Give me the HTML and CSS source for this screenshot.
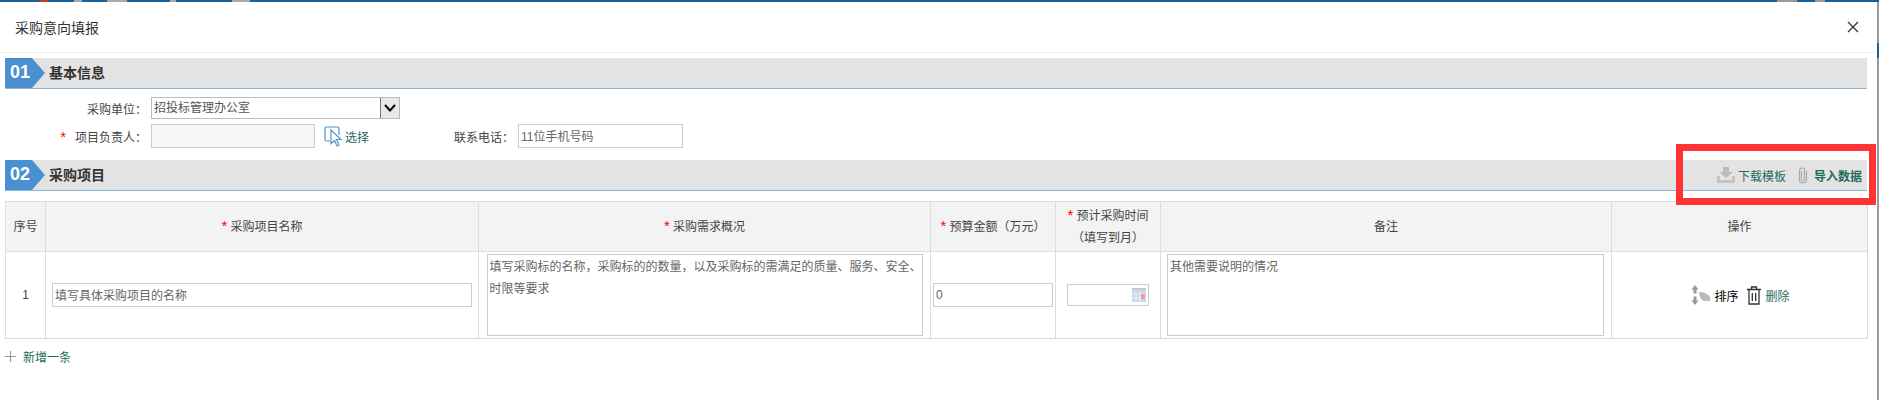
FILE: index.html
```html
<!DOCTYPE html>
<html lang="zh-CN">
<head>
  <meta charset="UTF-8" />
  <title>采购意向填报</title>
  <link rel="stylesheet" href="styles.css">
</head>
<body>
  <div class="top-strip"></div>

  <div class="modal">
    <div class="modal-head">
      <span class="modal-title">采购意向填报</span>
      <svg class="close-icon" width="12" height="12" viewBox="0 0 12 12"><path d="M1 1L11 11M11 1L1 11" stroke="#333" stroke-width="1.3" fill="none"/></svg>
    </div>

    <div class="modal-body">
      <div class="section-bar">
        <span class="badge">01</span>
        <span class="section-title">基本信息</span>
      </div>

      <div class="form-row form-row-first">
        <label class="form-label">采购单位&#xFF1A;</label>
        <div class="select-box">
          <span class="select-text">招投标管理办公室</span>
          <span class="select-arrow">
            <svg width="12" height="8" viewBox="0 0 12 8"><path d="M1 1L6 6.5L11 1" stroke="#000" stroke-width="2" fill="none"/></svg>
          </span>
        </div>
      </div>

      <div class="form-row">
        <label class="form-label"><span class="star star-form">*</span>项目负责人&#xFF1A;</label>
        <input class="text-input input-person input-gray" type="text" />
        <a class="pick-link">
          <svg width="19" height="21" viewBox="0 0 19 21">
            <path d="M6 15H2.5Q1 15 1 13.5V2.5Q1 1 2.5 1H13.5Q15 1 15 2.5V9" stroke="#4a90d0" stroke-width="1.2" fill="none"/>
            <path d="M7 4L17 13.5H12.5L15 19L13 20L10.5 14.5L7 17.5Z" stroke="#4a90d0" stroke-width="1.1" fill="#fff"/>
          </svg>
          <span>选择</span>
        </a>
        <label class="form-label form-label-phone">联系电话&#xFF1A;</label>
        <input class="text-input input-phone" type="text" value="11位手机号码" />
      </div>

      <div class="section-bar section-bar-second">
        <span class="badge">02</span>
        <span class="section-title">采购项目</span>
        <div class="bar-tools">
          <a class="tool-link">
            <svg width="18" height="16" viewBox="0 0 18 16">
              <path d="M6 0H12V5H16L9 11L2 5H6Z" fill="#bbb"/>
              <path d="M0 9H3V13H15V9H18V16H0Z" fill="#c4c4c4"/>
            </svg>
            <span>下载模板</span>
          </a>
          <a class="tool-link tool-link-strong">
            <svg width="10" height="17" viewBox="0 0 10 17">
              <path d="M3.5 4V12.5Q3.5 14 5 14Q6.5 14 6.5 12.5V3Q6.5 1 4.5 1Q1.5 1 1.5 3.5V13Q1.5 16 5 16Q8.5 16 8.5 13V4" stroke="#aaa" stroke-width="1.2" fill="none"/>
            </svg>
            <span>导入数据</span>
          </a>
        </div>
      </div>

      <table class="item-table">
        <colgroup>
          <col class="col-no" /><col class="col-name" /><col class="col-need" />
          <col class="col-money" /><col class="col-date" /><col class="col-note" /><col class="col-op" />
        </colgroup>
        <thead>
          <tr>
            <th>序号</th>
            <th><span class="star">*</span> 采购项目名称</th>
            <th><span class="star">*</span> 采购需求概况</th>
            <th><span class="star">*</span> 预算金额&#xFF08;万元&#xFF09;</th>
            <th><span class="star">*</span> 预计采购时间<br />&#xFF08;填写到月&#xFF09;</th>
            <th>备注</th>
            <th>操作</th>
          </tr>
        </thead>
        <tbody>
          <tr>
            <td>1</td>
            <td><input class="text-input input-cell" type="text" value="填写具体采购项目的名称" /></td>
            <td><textarea class="area-input">填写采购标的名称&#xFF0C;采购标的的数量&#xFF0C;以及采购标的需满足的质量、服务、安全、时限等要求</textarea></td>
            <td><input class="text-input input-money" type="text" value="0" /></td>
            <td>
              <div class="date-box">
                <svg width="14" height="14" viewBox="0 0 14 14">
                  <rect x="0" y="0" width="14" height="3" fill="#c9c9c9"/>
                  <rect x="0" y="2" width="14" height="12" fill="#c5d6ee"/>
                  <path d="M0 6H14M0 10H14M4 3V14M8 3V14" stroke="#eef3fa" stroke-width="1"/>
                  <rect x="9" y="6" width="4" height="5" fill="#f0a080"/>
                </svg>
              </div>
            </td>
            <td><textarea class="area-input area-note">其他需要说明的情况</textarea></td>
            <td>
              <div class="op-cell">
                <svg width="20" height="20" viewBox="0 0 20 20">
                  <path d="M4 0L7.5 4.5H5.5V8.5H2.5V4.5H0.5ZM2.5 11.5H5.5V15.5H7.5L4 20L0.5 15.5H2.5Z" fill="#999"/>
                  <path d="M8 7L13 7.5L18 10.5Q20 13 19 16L12 16Q8 12 8 7Z" fill="#bbb"/>
                </svg>
                <span class="op-sort">排序</span>
                <svg class="op-trash" width="14" height="19" viewBox="0 0 14 19">
                  <path d="M0 3.5H14M4.5 3V1H9.5V3M2 4V18H12V4M5.3 7V15M8.7 7V15" stroke="#333" stroke-width="1.3" fill="none"/>
                </svg>
                <a class="op-link">删除</a>
              </div>
            </td>
          </tr>
        </tbody>
      </table>

      <a class="add-row">
        <svg width="11" height="11" viewBox="0 0 11 11"><path d="M5.5 0V11M0 5.5H11" stroke="#999" stroke-width="1.2"/></svg>
        <span>新增一条</span>
      </a>
    </div>
  </div>

  <div class="mark-box"></div>
</body>
</html>
```

FILE: styles.css
```css
:root {
  --line: #dddddd;
  --field: #cccccc;
  --link: #1e6b5c;
  --band: #e3e3e3;
  --blue: #4a90d0;
}
html, body {
  margin: 0;
  height: 400px;
  overflow: hidden;
}
body {
  font-family: 'Liberation Sans', 'Noto Sans CJK SC', sans-serif;
  font-size: 12px;
  color: #333;
  background: linear-gradient(#999 43px, #1a5f96 43px, #1a5f96 58px, #999 58px);
}
.top-strip {
  height: 2px;
  background: linear-gradient(90deg,
    #1a5f96 39px, #a8471c 39px, #a8471c 48px, #1a5f96 48px,
    #1a5f96 74px, #aaa 74px, #aaa 82px, #1a5f96 82px,
    #1a5f96 107px, #aaa 107px, #aaa 127px, #1a5f96 127px,
    #1a5f96 170px, #aaa 170px, #aaa 176px, #1a5f96 176px,
    #1a5f96 232px, #aaa 232px, #aaa 250px, #1a5f96 250px,
    #1a5f96 1777px, #999 1777px, #999 1797px, #1a5f96 1797px,
    #1a5f96 1815px, #999 1815px, #999 1825px, #1a5f96 1825px);
}
.modal {
  width: 1877px;
  height: 398px;
  background: #fff;
}
.modal-head {
  height: 50px;
  display: flex;
  align-items: center;
  justify-content: space-between;
  padding: 0 18px 0 15px;
  border-bottom: 1px solid #eee;
}
.modal-title {
  font-size: 14px;
}
.modal-body {
  padding: 5px 10px 0 5px;
}

/* section bars */
.section-bar {
  display: flex;
  align-items: center;
  height: 30px;
  background: var(--band);
  border-bottom: 1px solid #8fb4d4;
}
.section-bar-second {
  margin-top: 12px;
}
.badge {
  width: 40px;
  height: 30px;
  line-height: 28px;
  padding-left: 5px;
  box-sizing: border-box;
  background: var(--blue);
  clip-path: polygon(0 0, 27px 0, 100% 50%, 27px 100%, 0 100%);
  color: #fff;
  font-size: 18px;
  font-weight: bold;
}
.section-title {
  margin-left: 4px;
  padding-bottom: 2px;
  font-size: 14px;
  font-weight: bold;
}
.bar-tools {
  margin-left: auto;
  display: flex;
  align-items: center;
  gap: 12px;
  padding-right: 5px;
}
.tool-link {
  display: flex;
  align-items: center;
  gap: 3px;
  color: var(--link);
}
.tool-link-strong {
  gap: 6px;
  font-weight: bold;
}

/* form */
.form-row {
  display: flex;
  align-items: center;
  margin-top: 5px;
}
.form-row-first {
  margin-top: 8px;
}
.form-label {
  width: 142px;
  margin-right: 4px;
  color: #444;
  text-align: right;
}
.form-label-phone {
  width: auto;
  margin-left: 85px;
}
.star {
  color: #f00;
  font-size: 15px;
  line-height: 12px;
}
.star-form {
  margin-right: 9px;
}
.text-input {
  box-sizing: border-box;
  height: 24px;
  padding: 0 2px 1px;
  border: 1px solid var(--field);
  background: #fff;
  font: inherit;
  color: #666;
  outline: none;
}
.input-gray {
  background: #f7f7f7;
}
.input-person {
  width: 164px;
}
.input-phone {
  width: 165px;
}
.select-box {
  display: flex;
  width: 249px;
  height: 22px;
  box-sizing: border-box;
  border: 1px solid #bbb;
  color: #555;
}
.select-text {
  flex: 1;
  line-height: 20px;
  padding-left: 2px;
}
.select-arrow {
  width: 18px;
  display: flex;
  align-items: center;
  justify-content: center;
  background: #e8e8e8;
  border-left: 1px solid #767676;
}
.pick-link {
  display: flex;
  align-items: center;
  gap: 2px;
  margin-left: 9px;
  color: var(--link);
}

/* table */
.item-table {
  width: 1862px;
  margin-top: 10px;
  border-collapse: collapse;
  table-layout: fixed;
}
.col-no { width: 40px; }
.col-name { width: 433px; }
.col-need { width: 452px; }
.col-money { width: 125px; }
.col-date { width: 105px; }
.col-note { width: 451px; }
.col-op { width: 256px; }
.item-table th,
.item-table td {
  border: 1px solid var(--line);
  padding: 0;
  text-align: center;
  vertical-align: middle;
}
.item-table th {
  height: 49px;
  line-height: 22px;
  background: #f3f3f3;
  color: #444;
  font-weight: normal;
}
.item-table td {
  height: 86px;
  color: #444;
}
.input-cell {
  display: block;
  width: 420px;
  margin: 0 auto;
}
.input-money {
  display: block;
  width: 120px;
  margin: 0 auto;
}
.area-input {
  display: block;
  box-sizing: border-box;
  width: 436px;
  height: 82px;
  margin: 0 auto;
  padding: 1px 0 0 2px;
  border: 1px solid var(--field);
  font: inherit;
  line-height: 22px;
  color: #666;
  resize: none;
  overflow: hidden;
  outline: none;
}
.area-note {
  width: 437px;
  margin-left: 6px;
}
.date-box {
  box-sizing: border-box;
  width: 82px;
  height: 22px;
  margin: 0 auto;
  padding-right: 2px;
  border: 1px solid var(--field);
  display: flex;
  align-items: center;
  justify-content: flex-end;
}
.op-cell {
  display: flex;
  align-items: center;
  justify-content: center;
  padding-left: 2px;
}
.op-sort {
  margin-left: 3px;
  color: #000;
}
.op-trash {
  margin: 0 5px 0 8px;
}
.op-link {
  color: var(--link);
}
.add-row {
  display: flex;
  align-items: center;
  gap: 7px;
  margin-top: 9px;
  color: var(--link);
}

/* red highlight drawn over the toolbar */
.mark-box {
  position: absolute;
  left: 1676px;
  top: 144px;
  width: 200px;
  height: 61px;
  box-sizing: border-box;
  border: 7px solid #ff3333;
}
```
